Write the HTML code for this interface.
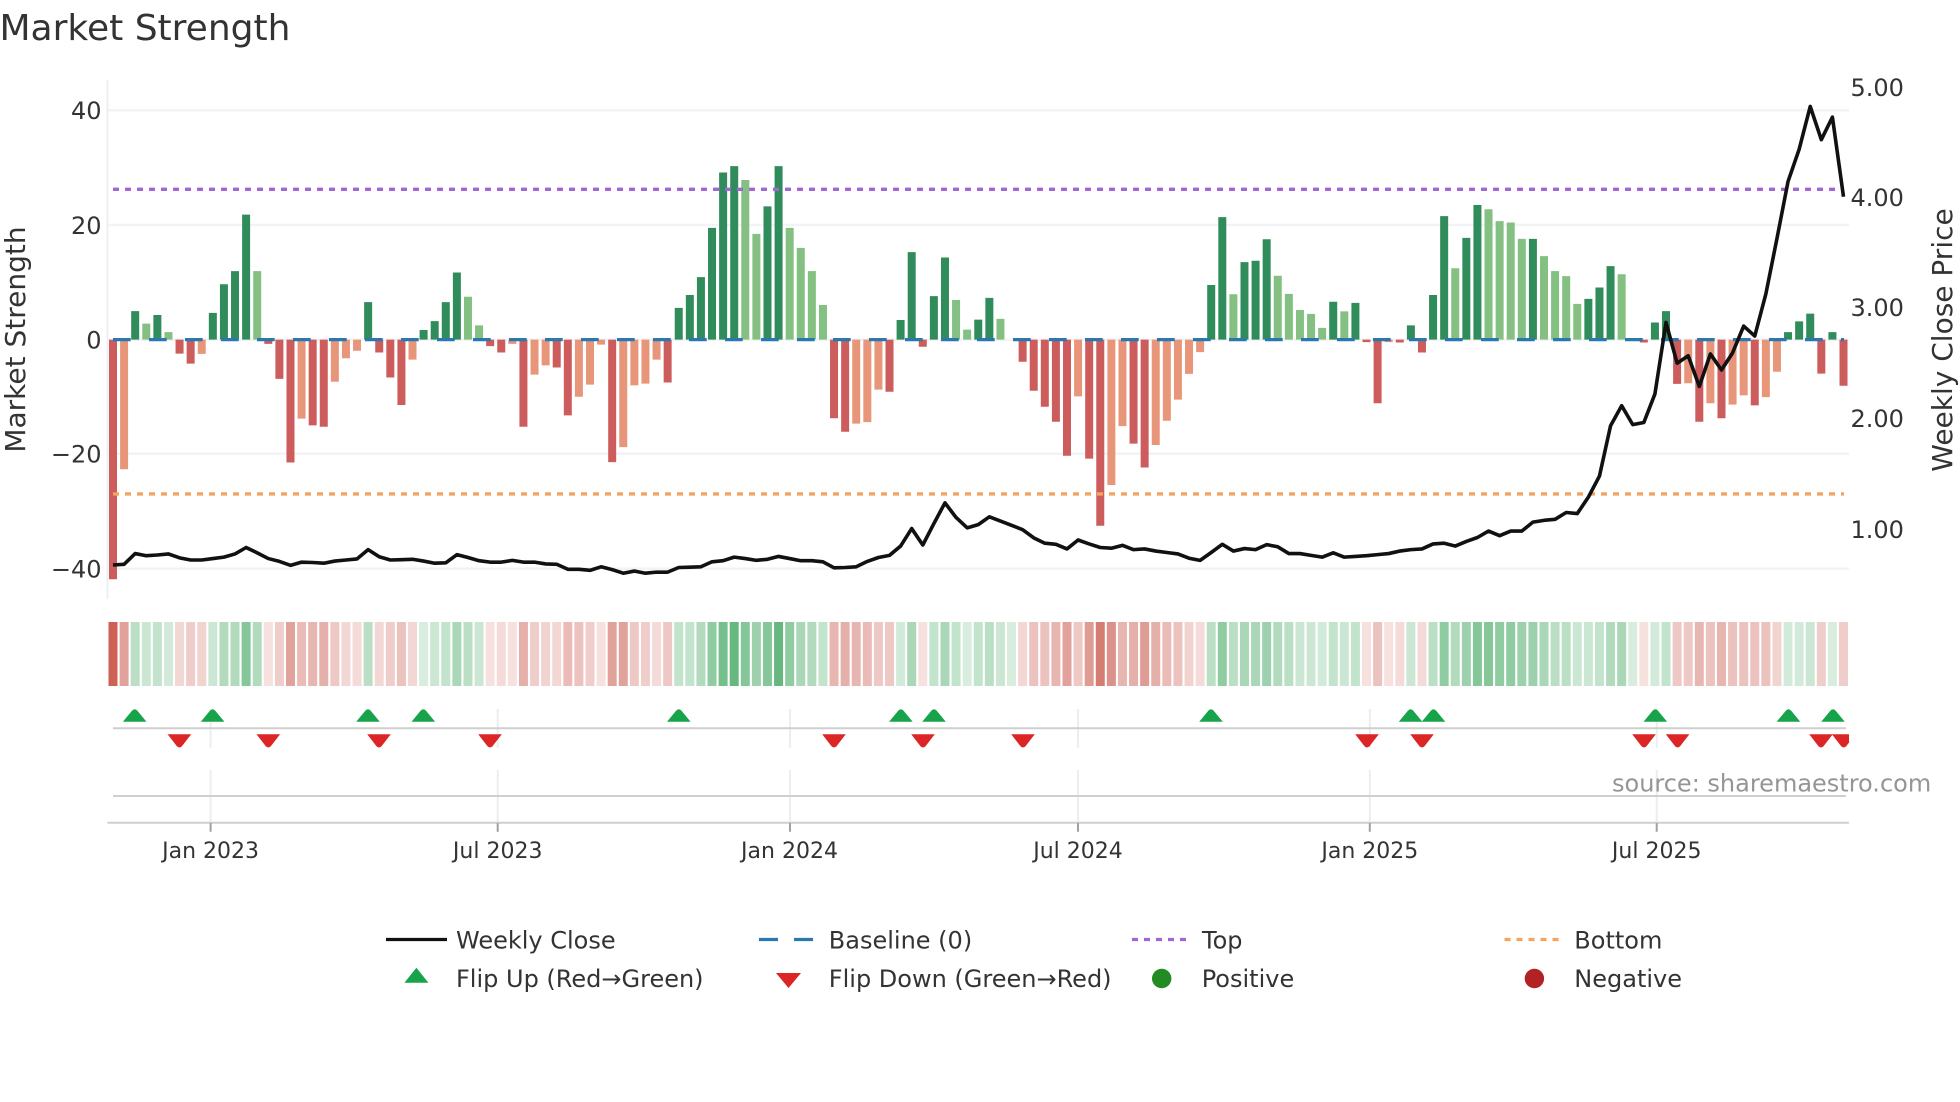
<!DOCTYPE html>
<html lang="en">
<head>
<meta charset="utf-8">
<title>Market Strength</title>
<style>
html,body{margin:0;padding:0;background:#fff}
svg{display:block}
text{font-family:"DejaVu Sans","Liberation Sans",sans-serif;fill:#333}
.t24{font-size:24px}
.t22{font-size:22px}
.t28{font-size:28px}
.n path,.n polyline{vector-effect:non-scaling-stroke;fill:none}
.h path{stroke-width:9}
</style>
</head>
<body>
<svg width="1960" height="1102" viewBox="0 0 1960 1102" xmlns="http://www.w3.org/2000/svg">
<defs>
<path id="u" d="M-11.8 721.7L-2.6 710.6Q0 707.8 2.6 710.6L11.8 721.7Z" fill="#16a34a"/>
<path id="d" d="M-11.8 734.3L-2.6 746.1Q0 748.9 2.6 746.1L11.8 734.3Z" fill="#dc2626"/>
<clipPath id="c"><rect x="100" y="700" width="1749" height="60"/></clipPath>
</defs>
<rect width="1960" height="1102" fill="#fff"/>

<text x="-0.5" y="40" font-size="36" style="font-size:36px">Market Strength</text>

<!-- grid -->
<g stroke="#f2f3f6" stroke-width="2.5">
<path d="M108 110.4H1849M108 225H1849M108 339.6H1849M108 453.6H1849M108 568.6H1849"/>
</g>
<path d="M107.5 80V599" stroke="#eeeff2" stroke-width="2"/>

<!-- y labels -->
<g class="t24" text-anchor="end">
<text x="101.5" y="119.2">40</text>
<text x="101.5" y="233.8">20</text>
<text x="101.5" y="348.4">0</text>
<text x="101.5" y="462.4">−20</text>
<text x="101.5" y="577.4">−40</text>
</g>
<text class="t28" transform="translate(25 339.5) rotate(-90)" text-anchor="middle">Market Strength</text>
<g class="t24">
<text x="1850.5" y="96">5.00</text>
<text x="1850.5" y="206">4.00</text>
<text x="1850.5" y="316">3.00</text>
<text x="1850.5" y="427">2.00</text>
<text x="1850.5" y="538">1.00</text>
</g>
<text class="t28" transform="translate(1952 340) rotate(-90)" text-anchor="middle">Weekly Close Price</text>

<!-- bars -->
<g class="n" transform="matrix(11.093 0 0 .35714 113 60)" stroke-width="8">
<path stroke="#308c5a" stroke-width="8" d="M2 783V703M4 783V714M9 783V708M10 783V628M11 783V591M12 783V433M23 783V678M28 783V756M29 783V731M30 783V678M31 783V595M51 783V694M52 783V658M53 783V608M54 783V470M55 783V315M56 783V297M59 783V410M60 783V297M71 783V728M72 783V538M74 783V661M75 783V553M78 783V727M79 783V666M99 783V630M100 783V440M102 783V566M103 783V562M104 783V502M110 783V677M112 783V680M117 783V743M119 783V658M120 783V437M122 783V498M123 783V406M128 783V501M133 783V669M134 783V637M135 783V577M139 783V735M140 783V703M151 783V762M152 783V732M153 783V710M155 783V762"/>
<path stroke="#83c081" stroke-width="8" d="M3 783V738M5 783V762M13 783V591M32 783V663M33 783V743M57 783V336M58 783V487M61 783V470M62 783V526M63 783V591M64 783V686M76 783V672M77 783V755M80 783V725M101 783V656M105 783V604M106 783V655M107 783V700M108 783V711M109 783V750M111 783V704M121 783V583M124 783V418M125 783V451M126 783V455M127 783V501M129 783V549M130 783V591M131 783V605M132 783V683M136 783V600"/>
<path stroke="#cd5c5c" stroke-width="8" d="M0 783V1454M6 783V822M7 783V850M14 783V795M15 783V893M16 783V1127M18 783V1023M19 783V1027M24 783V819M25 783V889M26 783V966M34 783V801M35 783V819M37 783V1027M40 783V861M41 783V995M45 783V1126M50 783V903M65 783V1003M66 783V1041M70 783V929M73 783V803M82 783V845M83 783V926M84 783V971M85 783V1013M86 783V1108M88 783V1116M89 783V1304M92 783V1074M93 783V1141M113 783V790M114 783V961M116 783V791M118 783V819M138 783V791M141 783V907M143 783V1013M145 783V1003M148 783V967M154 783V878M156 783V912"/>
<path stroke="#e8967a" stroke-width="8" d="M1 783V1146M8 783V823M17 783V1004M20 783V901M21 783V835M22 783V814M27 783V839M36 783V795M38 783V881M39 783V855M42 783V943M43 783V909M44 783V797M46 783V1084M47 783V911M48 783V906M49 783V839M67 783V1018M68 783V1014M69 783V923M87 783V942M90 783V1190M91 783V1025M94 783V1078M95 783V1010M96 783V951M97 783V879M98 783V818M115 783V790M142 783V905M144 783V961M146 783V965M147 783V939M149 783V944M150 783V873"/>
</g>

<!-- reference lines -->
<path d="M113 339.6H1844" stroke="#2a78ad" stroke-width="3.2" stroke-dasharray="17.7 18.3" fill="none"/>
<path d="M113 189.3H1844" stroke="#a066d3" stroke-width="3.4" stroke-dasharray="6 6" fill="none"/>
<path d="M113 493.9H1844" stroke="#f4a460" stroke-width="3.4" stroke-dasharray="6 6" fill="none"/>

<!-- weekly close -->
<g class="n" transform="matrix(11.093 0 0 .35714 113 60)">
<polyline stroke="#111" stroke-width="3.6" stroke-linejoin="round" points="0,1414 1,1412 2,1382 3,1388 4,1386 5,1383 6,1394 7,1400 8,1400 9,1396 10,1392 11,1383 12,1365 13,1380 14,1396 15,1404 16,1415 17,1406 18,1407 19,1409 20,1403 21,1400 22,1397 23,1371 24,1391 25,1400 26,1399 27,1398 28,1403 29,1409 30,1408 31,1385 32,1393 33,1402 34,1406 35,1406 36,1401 37,1406 38,1406 39,1411 40,1412 41,1426 42,1426 43,1429 44,1419 45,1427 46,1437 47,1431 48,1437 49,1434 50,1434 51,1421 52,1420 53,1419 54,1405 55,1402 56,1392 57,1396 58,1401 59,1398 60,1390 61,1396 62,1402 63,1402 64,1405 65,1422 66,1421 67,1419 68,1404 69,1393 70,1387 71,1361 72,1312 73,1358 74,1298 75,1240 76,1281 77,1310 78,1301 79,1279 80,1291 81,1303 82,1315 83,1338 84,1353 85,1356 86,1369 87,1344 88,1355 89,1365 90,1367 91,1359 92,1371 93,1369 94,1375 95,1379 96,1383 97,1395 98,1401 99,1379 100,1356 101,1375 102,1368 103,1371 104,1357 105,1363 106,1382 107,1382 108,1387 109,1392 110,1380 111,1392 112,1390 113,1388 114,1385 115,1382 116,1375 117,1371 118,1369 119,1355 120,1353 121,1361 122,1348 123,1337 124,1319 125,1332 126,1319 127,1319 128,1294 129,1289 130,1286 131,1267 132,1270 133,1224 134,1165 135,1024 136,968 137,1021 138,1015 139,935 140,735 141,849 142,828 143,914 144,823 145,868 146,820 147,745 148,773 149,655 150,500 151,340 152,250 153,130 154,223 155,160 156,383"/>
</g>

<!-- heat strip -->
<g class="n h" transform="matrix(11.093 0 0 1 113 0)">
<g stroke="#c0392b">
<path stroke-opacity=".15" d="M14 622V686M34 622V686M36 622V686M44 622V686M73 622V686M113 622V686M115 622V686M138 622V686"/>
<path stroke-opacity=".18" d="M22 622V686M35 622V686M49 622V686M98 622V686M116 622V686M118 622V686"/>
<path stroke-opacity=".2" d="M6 622V686M21 622V686M24 622V686M27 622V686M40 622V686M82 622V686"/>
<path stroke-opacity=".22" d="M8 622V686M39 622V686M97 622V686M150 622V686"/>
<path stroke-opacity=".25" d="M7 622V686M15 622V686M25 622V686M38 622V686M43 622V686M48 622V686M154 622V686M156 622V686"/>
<path stroke-opacity=".28" d="M20 622V686M47 622V686M50 622V686M69 622V686M70 622V686M87 622V686M141 622V686M142 622V686"/>
<path stroke-opacity=".31" d="M26 622V686M42 622V686M83 622V686M84 622V686M96 622V686M114 622V686M144 622V686M146 622V686M147 622V686M148 622V686M149 622V686"/>
<path stroke-opacity=".34" d="M17 622V686M41 622V686M68 622V686M95 622V686"/>
<path stroke-opacity=".37" d="M18 622V686M65 622V686M67 622V686M85 622V686M91 622V686M143 622V686M145 622V686"/>
<path stroke-opacity=".4" d="M19 622V686M37 622V686M66 622V686M92 622V686M94 622V686"/>
<path stroke-opacity=".47" d="M1 622V686M16 622V686M45 622V686M46 622V686M86 622V686"/>
<path stroke-opacity=".5" d="M88 622V686M93 622V686"/>
<path stroke-opacity=".55" d="M90 622V686"/>
<path stroke-opacity=".66" d="M89 622V686"/>
<path stroke-opacity=".8" d="M0 622V686"/>
</g>
<g stroke="#2e9e50">
<path stroke-opacity=".19" d="M28 622V686M77 622V686M81 622V686M137 622V686M155 622V686"/>
<path stroke-opacity=".22" d="M5 622V686M71 622V686M109 622V686M139 622V686M151 622V686M152 622V686"/>
<path stroke-opacity=".25" d="M3 622V686M9 622V686M29 622V686M33 622V686M80 622V686M107 622V686M108 622V686M111 622V686M117 622V686M132 622V686M133 622V686M153 622V686"/>
<path stroke-opacity=".29" d="M4 622V686M30 622V686M51 622V686M52 622V686M64 622V686M74 622V686M76 622V686M78 622V686M110 622V686M112 622V686M134 622V686M140 622V686"/>
<path stroke-opacity=".33" d="M2 622V686M23 622V686M32 622V686M79 622V686M99 622V686M101 622V686M106 622V686M119 622V686M130 622V686M131 622V686"/>
<path stroke-opacity=".37" d="M10 622V686M11 622V686M13 622V686M53 622V686M63 622V686M105 622V686M121 622V686M135 622V686"/>
<path stroke-opacity=".41" d="M31 622V686M62 622V686M72 622V686M75 622V686M102 622V686M103 622V686M129 622V686M136 622V686"/>
<path stroke-opacity=".47" d="M58 622V686M104 622V686M122 622V686M127 622V686M128 622V686"/>
<path stroke-opacity=".53" d="M54 622V686M61 622V686M100 622V686M120 622V686M125 622V686M126 622V686"/>
<path stroke-opacity=".58" d="M12 622V686M57 622V686M59 622V686M123 622V686M124 622V686"/>
<path stroke-opacity=".66" d="M55 622V686"/>
<path stroke-opacity=".73" d="M56 622V686M60 622V686"/>
</g>
</g>

<!-- lower panels -->
<g stroke="#ecedf0" stroke-width="2" fill="none">
<path d="M210.6 709V747.7M210.6 770V822M497.7 709V747.7M497.7 770V822M790 709V747.7M790 770V822M1078 709V747.7M1078 770V822M1369.8 709V747.7M1369.8 770V822M1656.7 709V747.7M1656.7 770V822"/>
</g>
<path d="M113 728.3H1846M113 796H1846" stroke="#cfcfcf" stroke-width="2"/>
<path d="M107.5 822.7H1849" stroke="#cfcfcf" stroke-width="2"/>
<path d="M210.6 823V831.7M497.7 823V831.7M790 823V831.7M1078 823V831.7M1369.8 823V831.7M1656.7 823V831.7" stroke="#a0a0a0" stroke-width="2"/>

<g clip-path="url(#c)">
<use href="#u" x="134.7"/><use href="#u" x="212.6"/><use href="#u" x="368"/><use href="#u" x="423.3"/><use href="#u" x="678.8"/><use href="#u" x="900.9"/><use href="#u" x="934"/><use href="#u" x="1211"/><use href="#u" x="1410.6"/><use href="#u" x="1433.5"/><use href="#u" x="1655.3"/><use href="#u" x="1788.5"/><use href="#u" x="1833"/>
<use href="#d" x="179.4"/><use href="#d" x="268.3"/><use href="#d" x="379"/><use href="#d" x="490"/><use href="#d" x="834"/><use href="#d" x="923"/><use href="#d" x="1023"/><use href="#d" x="1367"/><use href="#d" x="1422"/><use href="#d" x="1644"/><use href="#d" x="1677.6"/><use href="#d" x="1821"/><use href="#d" x="1843.7"/>
</g>

<text x="1612" y="791.7" style="font-size:24px;fill:#8f8f8f;fill-opacity:.95">source: sharemaestro.com</text>

<g class="t22" text-anchor="middle">
<text x="210.6" y="858.2">Jan 2023</text>
<text x="497.7" y="858.2">Jul 2023</text>
<text x="789.5" y="858.2">Jan 2024</text>
<text x="1078" y="858.2">Jul 2024</text>
<text x="1369.8" y="858.2">Jan 2025</text>
<text x="1656.7" y="858.2">Jul 2025</text>
</g>

<!-- legend -->
<path d="M386 939.5H447" stroke="#111" stroke-width="3.2"/>
<path d="M759 939.5H778M794 939.5H813" stroke="#2a78ad" stroke-width="3.2"/>
<path d="M1132 939.5H1187" stroke="#a066d3" stroke-width="3.2" stroke-dasharray="6 6"/>
<path d="M1504.5 939.5H1560" stroke="#f4a460" stroke-width="3.2" stroke-dasharray="6 6"/>
<polygon points="416.4,967.7 428.4,982.7 404.4,982.7" fill="#16a34a"/>
<polygon points="776,973 801,973 788.5,988" fill="#dc2626"/>
<circle cx="1161.7" cy="978.5" r="9.7" fill="#228b22"/>
<circle cx="1534.4" cy="978.5" r="9.7" fill="#b22222"/>
<g class="t24">
<text x="456" y="948.5">Weekly Close</text>
<text x="828.8" y="948.5">Baseline (0)</text>
<text x="1202" y="948.5">Top</text>
<text x="1574.3" y="948.5">Bottom</text>
<text x="456" y="987">Flip Up (Red→Green)</text>
<text x="828.8" y="987">Flip Down (Green→Red)</text>
<text x="1201.7" y="987">Positive</text>
<text x="1574.3" y="987">Negative</text>
</g>
</svg>
</body>
</html>
